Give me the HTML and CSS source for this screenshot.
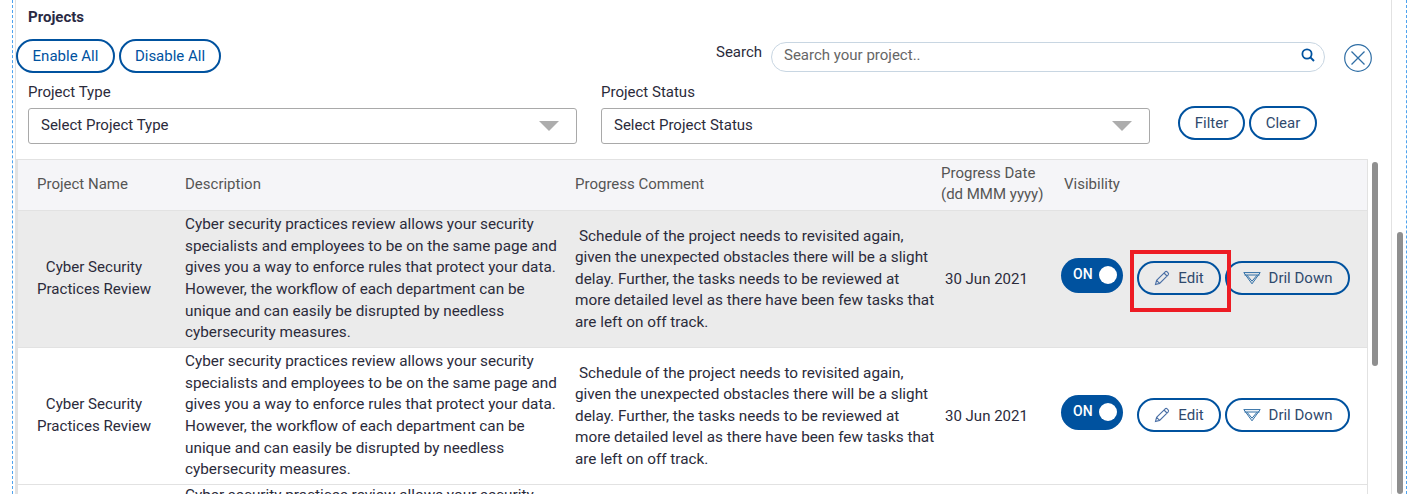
FILE: index.html
```html
<!DOCTYPE html>
<html lang="en">
<head>
    <meta charset="UTF-8">
    <title>Projects</title>
    <link rel="stylesheet" href="styles.css">
</head>
<body>
    <div class="frame">
        <div class="panel">
            <h4 class="title">Projects</h4>

            <div class="top-row">
                <div class="btn-group">
                    <button class="btn btn-wide">Enable All</button>
                    <button class="btn btn-wide">Disable All</button>
                </div>
                <div class="search-area">
                    <label class="search-label">Search</label>
                    <div class="search-box">
                        <span class="search-text">Search your project..</span>
                        <svg class="search-icon" width="14" height="14" viewBox="0 0 14 14"><circle cx="6" cy="6" r="4.6" fill="none" stroke="#00529f" stroke-width="1.8"/><path d="M9.4 9.4 L13 13" stroke="#00529f" stroke-width="2"/></svg>
                    </div>
                </div>
                <svg class="close-icon" width="28" height="28" viewBox="0 0 28 28"><circle cx="14" cy="14" r="13.3" fill="none" stroke="#2f6ea5" stroke-width="1.2"/><path d="M7.5 7.5 L20.5 20.5 M20.5 7.5 L7.5 20.5" stroke="#2f6ea5" stroke-width="1.3"/></svg>
            </div>

            <div class="filter-row">
                <div class="field">
                    <label class="field-label">Project Type</label>
                    <div class="select-box">Select Project Type<span class="caret"></span></div>
                </div>
                <div class="field">
                    <label class="field-label">Project Status</label>
                    <div class="select-box">Select Project Status<span class="caret"></span></div>
                </div>
                <div class="btn-group filter-btns">
                    <button class="btn btn-filter">Filter</button>
                    <button class="btn btn-clear">Clear</button>
                </div>
            </div>

            <div class="table-area">
                <table class="grid">
                    <colgroup>
                        <col class="col-name"><col class="col-desc"><col class="col-comment"><col class="col-date"><col class="col-vis">
                    </colgroup>
                    <thead>
                        <tr>
                            <th>Project Name</th>
                            <th>Description</th>
                            <th>Progress Comment</th>
                            <th class="th-date">Progress Date<br>(dd MMM yyyy)</th>
                            <th>Visibility</th>
                        </tr>
                    </thead>
                    <tbody>
                        <tr class="selected">
                            <td class="name">Cyber Security<br>Practices Review</td>
                            <td class="desc">Cyber security practices review allows your security specialists and employees to be on the same page and gives you a way to enforce rules that protect your data. However, the workflow of each department can be unique and can easily be disrupted by needless cybersecurity measures.</td>
                            <td class="comment">Schedule of the project needs to revisited again, given the unexpected obstacles there will be a slight delay. Further, the tasks needs to be reviewed at more detailed level as there have been few tasks that are left on off track.</td>
                            <td class="date">30 Jun 2021</td>
                            <td>
                                <div class="actions">
                                    <span class="toggle">ON<span class="knob"></span></span>
                                    <button class="btn btn-edit">
                                        <svg width="16" height="16" viewBox="0 0 16 16"><path d="M1.5 14.5 L2.6 10.4 L11.2 1.8 Q12.2 1 13.2 1.9 L14.1 2.8 Q15 3.8 14.2 4.8 L5.6 13.4 Z M10 3 L13 6 M2.6 10.4 L5.6 13.4" fill="none" stroke="#4a6fa5" stroke-width="1.1"/></svg>
                                        Edit
                                        <span class="highlight"></span>
                                    </button>
                                    <button class="btn btn-drill">
                                        <svg width="18" height="13" viewBox="0 0 18 13"><path d="M.8 .6 H17.2 L9 11.8 Z M1.5 3 H16.5 M4 3.2 L9 9.2 L14 3.2" fill="none" stroke="#2f6ea5" stroke-width="1"/></svg>
                                        Dril Down
                                    </button>
                                </div>
                            </td>
                        </tr>
                        <tr>
                            <td class="name">Cyber Security<br>Practices Review</td>
                            <td class="desc">Cyber security practices review allows your security specialists and employees to be on the same page and gives you a way to enforce rules that protect your data. However, the workflow of each department can be unique and can easily be disrupted by needless cybersecurity measures.</td>
                            <td class="comment">Schedule of the project needs to revisited again, given the unexpected obstacles there will be a slight delay. Further, the tasks needs to be reviewed at more detailed level as there have been few tasks that are left on off track.</td>
                            <td class="date">30 Jun 2021</td>
                            <td>
                                <div class="actions">
                                    <span class="toggle">ON<span class="knob"></span></span>
                                    <button class="btn btn-edit">
                                        <svg width="16" height="16" viewBox="0 0 16 16"><path d="M1.5 14.5 L2.6 10.4 L11.2 1.8 Q12.2 1 13.2 1.9 L14.1 2.8 Q15 3.8 14.2 4.8 L5.6 13.4 Z M10 3 L13 6 M2.6 10.4 L5.6 13.4" fill="none" stroke="#4a6fa5" stroke-width="1.1"/></svg>
                                        Edit
                                    </button>
                                    <button class="btn btn-drill">
                                        <svg width="18" height="13" viewBox="0 0 18 13"><path d="M.8 .6 H17.2 L9 11.8 Z M1.5 3 H16.5 M4 3.2 L9 9.2 L14 3.2" fill="none" stroke="#2f6ea5" stroke-width="1"/></svg>
                                        Dril Down
                                    </button>
                                </div>
                            </td>
                        </tr>
                        <tr class="cut-row">
                            <td></td>
                            <td class="desc">Cyber security practices review allows your security</td>
                            <td></td>
                            <td></td>
                            <td></td>
                        </tr>
                    </tbody>
                </table>
                <div class="table-scroll"></div>
            </div>
        </div>
        <div class="page-scroll"></div>
    </div>
</body>
</html>
```

FILE: styles.css
```css
/* Page frame */
html, body {
    margin: 0;
    height: 494px;
    overflow: hidden;
    background: #fff;
}

body {
    font-family: 'Roboto', 'Inter', sans-serif;
    font-size: 15px;
    color: #2b2b3b;
}

.frame {
    height: 494px;
    margin: 0 19px 0 12px;
    border-left: 1px dashed #4ea3ee;
    border-right: 1px dashed #4ea3ee;
    display: flex;
    box-sizing: border-box;
}

.panel {
    width: 1377px;
    margin-left: 2px;
    border-left: 1px solid #e2e2e2;
    border-right: 1px solid #e2e2e2;
    box-sizing: border-box;
    height: 494px;
    overflow: hidden;
}

.page-scroll {
    width: 6px;
    margin: 232px 0 0 5px;
    background: #8f8f8f;
    border-radius: 3px;
}

.title {
    margin: 0;
    padding: 9px 0 0 12px;
    height: 39px;
    box-sizing: border-box;
    font-size: 15px;
    line-height: 17px;
    font-weight: 700;
    color: #2a2a44;
}

/* Buttons */
.btn {
    font-family: inherit;
    font-size: 15px;
    color: #2f4a6e;
    background: transparent;
    border: 2px solid #00529f;
    border-radius: 17px;
    height: 34px;
    padding: 0;
    cursor: pointer;
    display: inline-flex;
    align-items: center;
    justify-content: center;
}

.btn-group {
    display: flex;
    gap: 4px;
}

.btn-wide:first-child {
    width: 99px;
    color: #00529f;
}

.btn-wide:last-child {
    width: 102px;
    color: #00529f;
}

.top-row {
    display: flex;
    align-items: flex-start;
    height: 44px;
}

.search-area {
    display: flex;
    margin-left: 495px;
    padding-top: 3px;
}

.search-label {
    width: 55px;
    line-height: 20px;
}

.search-box {
    width: 554px;
    height: 30px;
    border: 1px solid #c8d6e2;
    border-radius: 15px;
    box-sizing: border-box;
    display: flex;
    align-items: center;
    justify-content: space-between;
    padding: 0 9px 4px 12px;
    color: #666;
}

.close-icon {
    margin: 5px 0 0 19px;
}

/* Filters */
.filter-row {
    display: flex;
    padding-left: 12px;
    height: 76px;
}

.field {
    width: 549px;
    margin-right: 24px;
}

.field-label {
    display: block;
    line-height: 18px;
    margin-bottom: 7px;
}

.select-box {
    height: 36px;
    border: 1px solid #a9a9a9;
    border-radius: 3px;
    box-sizing: border-box;
    display: flex;
    align-items: center;
    justify-content: space-between;
    padding: 0 17px 2px 12px;
}

.caret {
    width: 0;
    height: 0;
    margin-top: 2px;
    border-left: 10px solid transparent;
    border-right: 10px solid transparent;
    border-top: 10px solid #adadad;
}

.filter-btns {
    margin: 23px 0 0 4px;
    align-self: flex-start;
}

.btn-filter {
    width: 67px;
}

.btn-clear {
    width: 68px;
}

/* Table */
.table-area {
    display: flex;
    align-items: flex-start;
}

.grid {
    width: 1352px;
    table-layout: fixed;
    border-collapse: collapse;
    border: 1px solid #e2e2e2;
    border-left-width: 2px;
    flex: none;
}

.col-name { width: 153px; }
.col-desc { width: 390px; }
.col-comment { width: 376px; }
.col-date { width: 113px; }
.col-vis { width: auto; }

.grid th {
    height: 51px;
    background: #f5f5f8;
    font-weight: 400;
    text-align: left;
    color: #555;
    padding: 0 0 2px 15px;
    line-height: 21px;
    border-bottom: 1px solid #e2e2e2;
    box-sizing: border-box;
}

.grid th:first-child {
    padding-left: 19px;
}

.grid th.th-date {
    padding-left: 5px;
}

.grid td {
    height: 137px;
    padding: 0 14px 0 15px;
    font-size: 15.3px;
    line-height: 21.6px;
    border-bottom: 1px solid #e2e2e2;
    box-sizing: border-box;
}

.grid td.name {
    text-align: center;
    font-size: 15.1px;
    padding: 0;
}

.grid td.desc {
    padding-right: 0;
}

.grid td.comment {
    padding: 1px 0 0 15px;
    text-indent: 4px;
}

.grid td.date {
    font-size: 15px;
    padding: 1px 0 0 9px;
}

.selected td {
    background: #ebebeb;
}

.cut-row td {
    vertical-align: top;
    padding-top: 0;
}

.actions {
    display: flex;
    align-items: center;
    gap: 4px;
    margin-top: -2px;
}

.toggle {
    width: 62px;
    height: 35px;
    margin: -5px 10px 0 -3px;
    box-sizing: border-box;
    border-radius: 18px;
    background: #00529f;
    color: #fff;
    font-size: 14px;
    font-weight: 500;
    display: flex;
    align-items: center;
    justify-content: space-between;
    padding: 0 6px 2px 12px;
}

.knob {
    width: 18px;
    height: 18px;
    background: #fff;
    border-radius: 50%;
}

.btn-edit {
    position: relative;
    width: 84px;
    gap: 8px;
}

.btn-drill {
    width: 125px;
    gap: 8px;
}

.highlight {
    position: absolute;
    left: -9px;
    top: -13px;
    width: 101px;
    height: 62px;
    border: 4px solid #ed1c24;
    box-sizing: border-box;
}

.table-scroll {
    width: 6px;
    height: 204px;
    margin: 3px 0 0 4px;
    background: #8f8f8f;
    border-radius: 3px;
    flex: none;
}
```
